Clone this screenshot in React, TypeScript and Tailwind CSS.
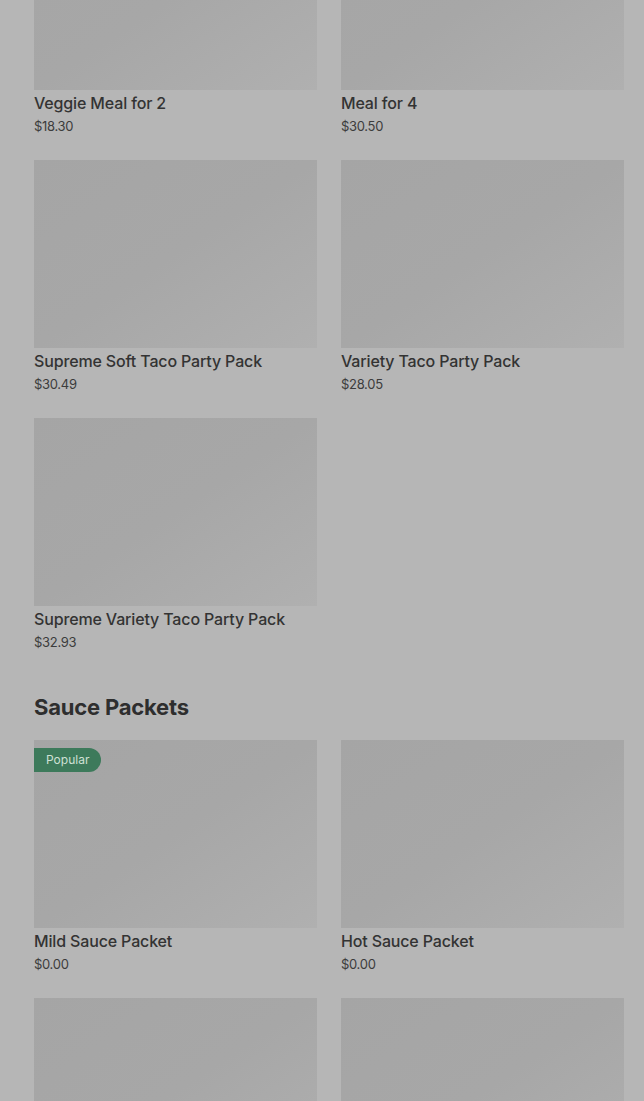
import React from 'react';

type Item = { name: string; price: string; popular?: boolean };

const MEALS: Item[] = [
  { name: 'Veggie Meal for 2', price: '$18.30' },
  { name: 'Meal for 4', price: '$30.50' },
  { name: 'Supreme Soft Taco Party Pack', price: '$30.49' },
  { name: 'Variety Taco Party Pack', price: '$28.05' },
  { name: 'Supreme Variety Taco Party Pack', price: '$32.93' },
];

const SAUCES: Item[] = [
  { name: 'Mild Sauce Packet', price: '$0.00', popular: true },
  { name: 'Hot Sauce Packet', price: '$0.00' },
  { name: 'Fire Sauce Packet', price: '$0.00' },
  { name: 'Diablo Sauce Packet', price: '$0.00' },
];

const ItemCard: React.FC<{ item: Item }> = ({ item }) => (
  <div className="flex flex-col">
    <div className="relative h-[188px] bg-gradient-to-br from-[#a5a5a5] via-[#a7a7a7] to-[#b0b0b0]">
      {item.popular && (
        <span className="absolute left-0 top-[8px] flex h-[24px] items-center rounded-r-full bg-[#3d7a5b] pl-[12px] pr-[12px] text-[12px] text-[#cfe0d5]">
          Popular
        </span>
      )}
    </div>
    <div className="mt-[2px] text-[16px] leading-[22px] font-medium tracking-[-0.15px] text-[#333333]">{item.name}</div>
    <div className="mt-[2px] text-[13px] leading-[20px] tracking-[-0.3px] text-[#3c3c3c]">{item.price}</div>
  </div>
);

export default function App() {
  return (
    <div className="h-[1101px] overflow-hidden bg-[#b6b6b6] font-['Inter',sans-serif]">
      <div className="-mt-[98px] pl-[34px] pr-[20px]">
        <div className="grid grid-cols-2 gap-x-[24px] gap-y-[24px]">
          {MEALS.map(m => (
            <ItemCard key={m.name} item={m} />
          ))}
        </div>

        <h2 className="mt-[39px] mb-[17px] text-[22px] leading-[32px] font-bold tracking-[-0.2px] text-[#2e2e2e]">
          Sauce Packets
        </h2>

        <div className="grid grid-cols-2 gap-x-[24px] gap-y-[24px]">
          {SAUCES.map(s => (
            <ItemCard key={s.name} item={s} />
          ))}
        </div>
      </div>
    </div>
  );
}
